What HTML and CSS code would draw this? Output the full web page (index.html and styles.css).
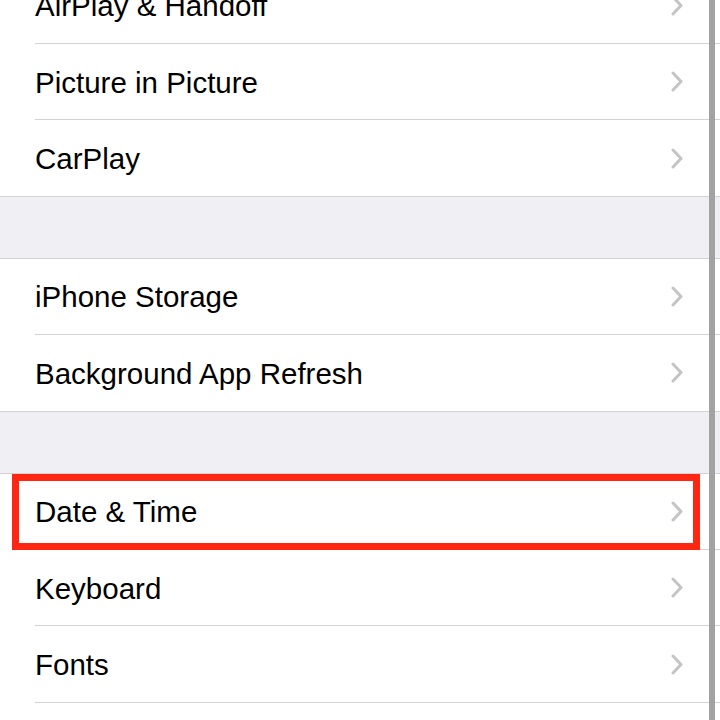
FILE: index.html
```html
<!DOCTYPE html>
<html lang="en">
<head>
    <meta charset="UTF-8">
    <meta name="viewport" content="width=device-width, initial-scale=1.0">
    <title>General</title>
    <link rel="stylesheet" href="styles.css">
</head>
<body>

    <div class="settings">
        <div class="group">
            <div class="row"><span class="label">AirPlay &amp; Handoff</span><svg class="chevron" viewBox="0 0 12 21"><path d="M2 2 L10 10.5 L2 19"/></svg></div>
            <div class="row"><span class="label">Picture in Picture</span><svg class="chevron" viewBox="0 0 12 21"><path d="M2 2 L10 10.5 L2 19"/></svg></div>
            <div class="row"><span class="label">CarPlay</span><svg class="chevron" viewBox="0 0 12 21"><path d="M2 2 L10 10.5 L2 19"/></svg></div>
        </div>

        <div class="spacer"></div>

        <div class="group">
            <div class="row"><span class="label">iPhone Storage</span><svg class="chevron" viewBox="0 0 12 21"><path d="M2 2 L10 10.5 L2 19"/></svg></div>
            <div class="row"><span class="label">Background App Refresh</span><svg class="chevron" viewBox="0 0 12 21"><path d="M2 2 L10 10.5 L2 19"/></svg></div>
        </div>

        <div class="spacer"></div>

        <div class="group">
            <div class="row">
                <span class="label">Date &amp; Time</span><svg class="chevron" viewBox="0 0 12 21"><path d="M2 2 L10 10.5 L2 19"/></svg>
                <!-- red box marking the row -->
                <div class="highlight"></div>
            </div>
            <div class="row"><span class="label">Keyboard</span><svg class="chevron" viewBox="0 0 12 21"><path d="M2 2 L10 10.5 L2 19"/></svg></div>
            <div class="row"><span class="label">Fonts</span><svg class="chevron" viewBox="0 0 12 21"><path d="M2 2 L10 10.5 L2 19"/></svg></div>
            <div class="row"></div>
        </div>
    </div>

    <div class="scroll-indicator"></div>

</body>
</html>
```

FILE: styles.css
```css
html, body {
    margin: 0;
    padding: 0;
    overflow: hidden;
    background-color: #ffffff;
}
body {
    font-family: "Liberation Sans", Arial, sans-serif;
    color: #000000;
}
.settings {
    margin-top: -32.4px;
}
.group {
    background-color: #ffffff;
    border-top: 1px solid #d1d1d6;
    border-bottom: 1px solid #d1d1d6;
}
.group:first-child {
    border-top: none;
}
.row {
    position: relative;
    display: flex;
    align-items: center;
    justify-content: space-between;
    height: 76.4px;
    box-sizing: border-box;
    margin-left: 35px;
    padding-right: 37px;
    border-bottom: 1px solid #d1d1d6;
}
.row:last-child {
    border-bottom: none;
    height: 75.4px;
}
.label {
    font-size: 29.5px;
    padding-top: 2px;
}
.chevron {
    width: 12px;
    height: 21px;
    fill: none;
    stroke: #c4c4c7;
    stroke-width: 3;
    stroke-linecap: round;
    stroke-linejoin: round;
}
.spacer {
    height: 61px;
    background-color: #efeff4;
}
.highlight {
    position: absolute;
    left: -23px;
    right: 20px;
    top: 0;
    bottom: -1px;
    border: 7px solid #ff2712;
}
.scroll-indicator {
    position: fixed;
    top: 0;
    bottom: 0;
    left: 709px;
    width: 6px;
    background-color: #a2a2a2;
}
```
